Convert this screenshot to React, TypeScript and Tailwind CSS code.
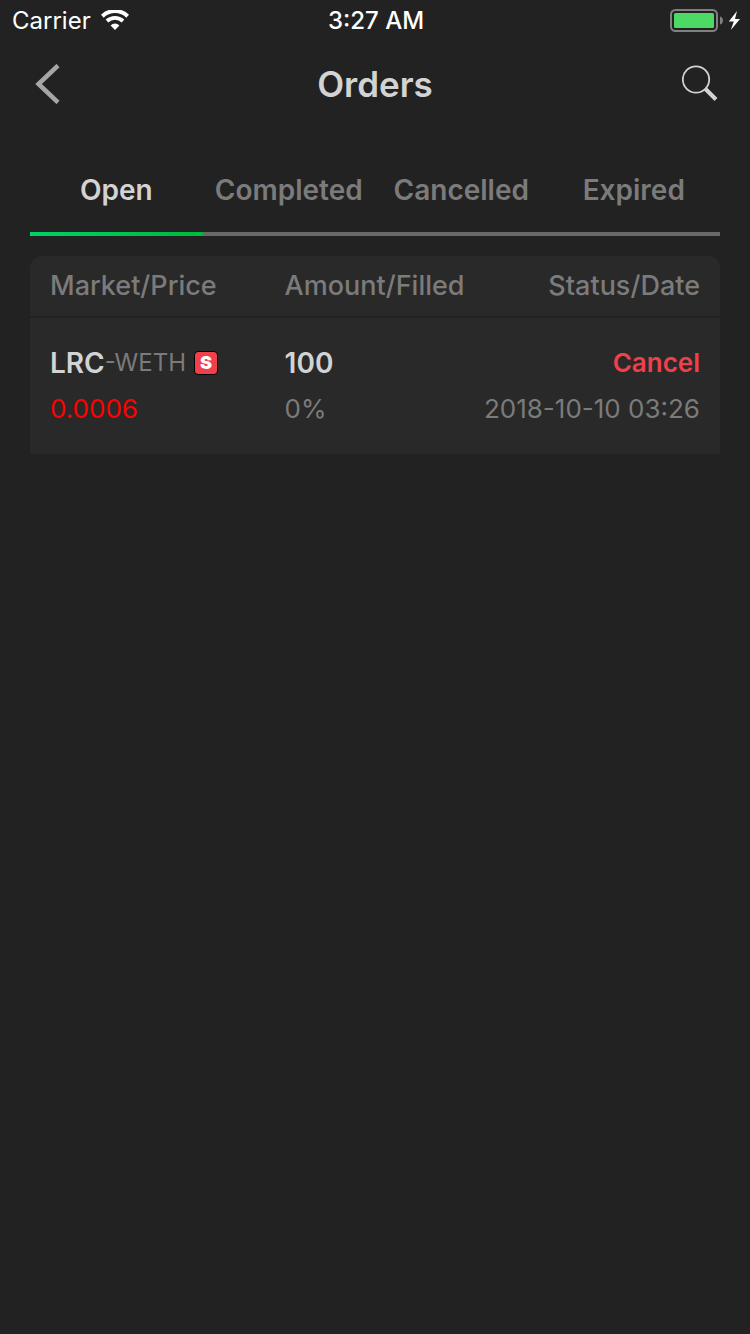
import React, { useState } from 'react';

interface Order {
  id: number;
  base: string;
  quote: string;
  side: string;
  price: string;
  amount: string;
  filled: string;
  date: string;
}

const tabs = ['Open', 'Completed', 'Cancelled', 'Expired'];

const openOrders: Order[] = [
  {
    id: 1,
    base: 'LRC',
    quote: 'WETH',
    side: 'S',
    price: '0.0006',
    amount: '100',
    filled: '0%',
    date: '2018-10-10 03:26',
  },
];

const StatusBar: React.FC = () => (
  <div className="grid h-[42px] grid-cols-3 items-center pr-2.5 pl-3 text-2xl text-white">
    <div className="flex items-center gap-2.5">
      <span>Carrier</span>
      <svg width="28" height="22" viewBox="0 0 28 22" fill="none">
        <path d="M1.3 6.2a18.200 18.200 0 0 1 25.400 0" stroke="white" strokeWidth="4" />
        <path d="M6 11a11.600 11.600 0 0 1 16 0" stroke="white" strokeWidth="3.800" />
        <path d="M14 20l-4.400-4.600a6.300 6.300 0 0 1 8.800 0z" fill="white" />
      </svg>
    </div>
    <span className="text-center font-medium">3:27 AM</span>
    <div className="flex justify-end">
      <svg width="70" height="24" viewBox="0 0 70 24">
        <rect x="1" y="1" width="46" height="21" rx="4.500" fill="none" stroke="#808080" strokeWidth="2" />
        <rect x="4" y="4" width="40" height="15" rx="1.500" fill="#4cd964" />
        <path d="M50 7.500c4 1 4 7 0 8z" fill="#808080" />
        <path d="M67 2l-8.200 10.400h5L60.800 21 70 10h-5z" fill="white" />
      </svg>
    </div>
  </div>
);

const App: React.FC = () => {
  const [active, setActive] = useState('Open');
  const orders = active === 'Open' ? openOrders : [];

  return (
    <div className="min-h-screen bg-[#222222] font-['Inter',sans-serif] text-[#d3d3d3]">
      <StatusBar />

      {/* Nav bar */}
      <header className="grid h-[84px] grid-cols-3 items-center px-8">
        <button aria-label="Back" className="justify-self-start">
          <svg width="32" height="40" viewBox="0 0 32 40" fill="none">
            <path d="M26 1.500L6.500 20 26 38.500" stroke="#a6a6a6" strokeWidth="4.500" />
          </svg>
        </button>
        <h1 className="text-center text-[35px] font-semibold">Orders</h1>
        <button aria-label="Search" className="justify-self-end">
          <svg width="36" height="38" viewBox="0 0 36 38" fill="none">
            <circle cx="14" cy="14.500" r="13.200" stroke="#d3d3d3" strokeWidth="1.800" />
            <path d="M23.500 24L34 34.500" stroke="#d3d3d3" strokeWidth="4" />
          </svg>
        </button>
      </header>

      <main className="px-[30px] pt-[22px]">
        {/* Tabs */}
        <nav className="grid h-[88px] grid-cols-4">
          {tabs.map((tab) => (
            <button
              key={tab}
              onClick={() => setActive(tab)}
              className="flex flex-col text-[28px] font-semibold"
            >
              <span
                className={
                  active === tab
                    ? 'flex w-full flex-1 items-center justify-center'
                    : 'flex w-full flex-1 items-center justify-center text-[#7b7b7b]'
                }
              >
                {tab}
              </span>
              <span
                className={
                  active === tab
                    ? 'h-1 w-full bg-linear-to-r from-[#00d264] to-[#00b93c]'
                    : 'h-1 w-full bg-[#696969]'
                }
              />
            </button>
          ))}
        </nav>

        {/* Orders */}
        <div className="mt-5 overflow-hidden rounded-t-xl bg-[#292929]">
          <table className="w-full table-fixed text-left text-[26px] text-[#7b7b7b]">
            <thead>
              <tr className="h-[61px] border-b-2 border-[#222222] text-[27px]">
                <th className="w-[34%] pl-5 font-medium">Market/Price</th>
                <th className="w-[31%] pl-5 font-medium">Amount/Filled</th>
                <th className="pr-5 text-right font-medium">Status/Date</th>
              </tr>
            </thead>
            <tbody>
              {orders.map((order) => (
                <tr key={order.id} className="h-[137px] whitespace-nowrap leading-9">
                  <td className="pl-5">
                    <div className="mb-2.5 flex items-center">
                      <span className="text-[28px] font-semibold text-[#d3d3d3]">{order.base}</span>
                      <span className="text-2xl">-{order.quote}</span>
                      <span className="ml-2 flex h-6 w-6 items-center justify-center rounded border border-black bg-[#f0404c] text-lg font-black text-white">
                        {order.side}
                      </span>
                    </div>
                    <div className="text-[#ff0000]">{order.price}</div>
                  </td>
                  <td className="pl-5">
                    <div className="mb-2.5 text-[28px] font-semibold text-[#d3d3d3]">{order.amount}</div>
                    <div>{order.filled}</div>
                  </td>
                  <td className="pr-5 text-right">
                    <button className="mb-2.5 block w-full text-right font-semibold text-[#f0404c]">Cancel</button>
                    <div>{order.date}</div>
                  </td>
                </tr>
              ))}
            </tbody>
          </table>
        </div>
      </main>
    </div>
  );
};

export default App;
